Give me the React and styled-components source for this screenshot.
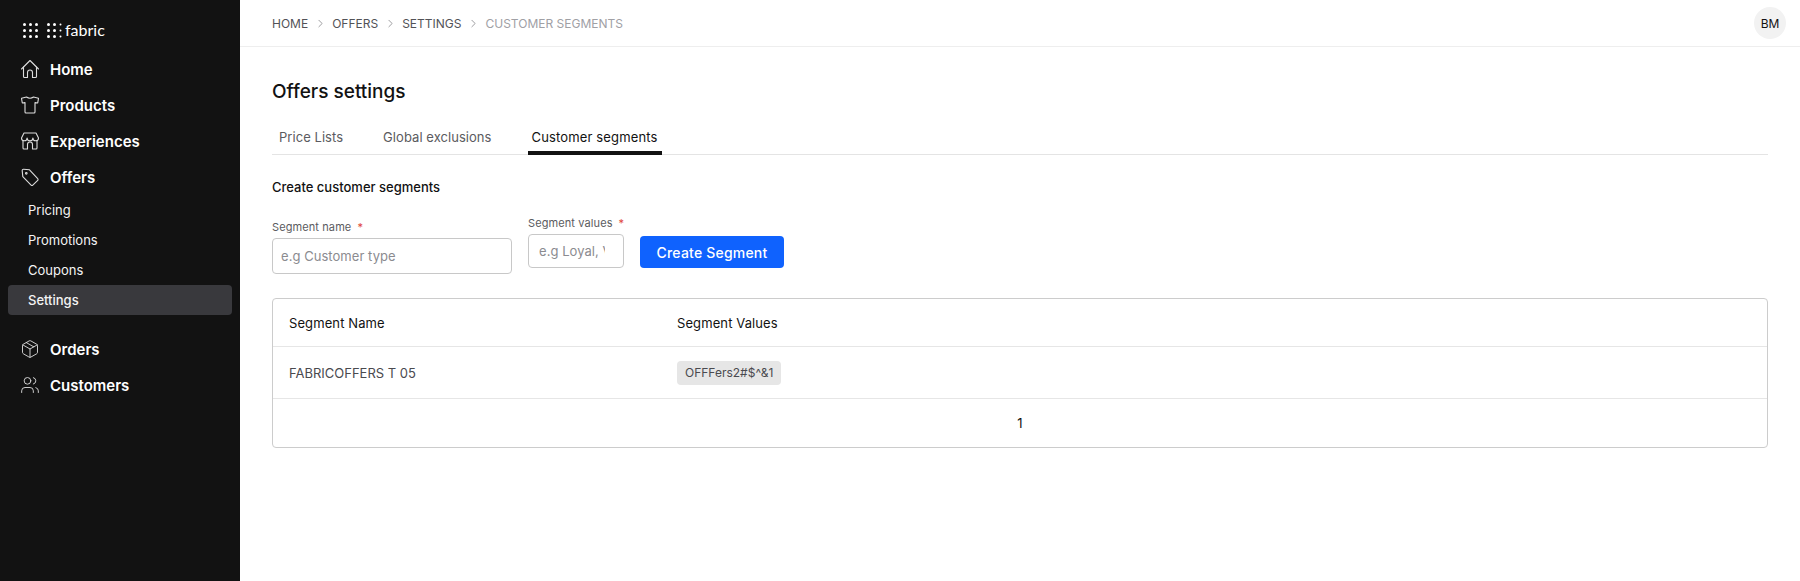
import React from "react";
import styled, { createGlobalStyle } from "styled-components";
import { Package, Users, ChevronRight } from "lucide-react";

const GlobalStyle = createGlobalStyle`
    html, body { margin: 0; padding: 0; background: #fff; }
    body { font-family: "Inter", "Liberation Sans", sans-serif; color: #121212; }
    * { box-sizing: border-box; }
`;

const Page = styled.div`
    display: flex;
    width: 100%;
    height: 581px;
    overflow: hidden;
`;

const Sidebar = styled.aside`
    width: 240px;
    flex: none;
    background: #121212;
    padding: 19px 8px 0;
`;

const LogoRow = styled.div`
    display: flex;
    align-items: center;
    height: 22px;
    padding-left: 15px;
    gap: 9px;
    margin-bottom: 10px;
`;

const LogoMark = styled.div`
    display: flex;
    align-items: center;
    gap: 3px;
`;

const LogoText = styled.span`
    font-family: "Lato", sans-serif;
    font-weight: 400;
    font-size: 16px;
    color: #fff;
    line-height: 22px;
`;

const NavItem = styled.div`
    display: flex;
    align-items: center;
    height: 36px;
    padding-left: 12px;
    gap: 10px;
    color: #fff;
    font-size: 15px;
    font-weight: 600;
    svg { color: #dcdcdc; flex: none; }
`;

const SubList = styled.div`
    display: flex;
    flex-direction: column;
    margin-bottom: 16px;
`;

const SubItem = styled.div`
    height: 30px;
    display: flex;
    align-items: center;
    padding-left: 20px;
    font-size: 13px;
    border-radius: 4px;
    color: #f4f4f4;
    font-weight: ${(p) => (p.$active ? 500 : 400)};
    background: ${(p) => (p.$active ? "#39393d" : "transparent")};
`;

const Main = styled.main`
    flex: 1;
    min-width: 0;
    display: flex;
    flex-direction: column;
`;

const TopBar = styled.header`
    height: 47px;
    flex: none;
    border-bottom: 1px solid #eeeeee;
    display: flex;
    align-items: center;
    justify-content: space-between;
    padding: 0 14px 0 32px;
`;

const Crumbs = styled.nav`
    display: flex;
    align-items: center;
    gap: 5.5px;
    font-size: 12px;
    svg { color: #6a6a6f; }
`;

const Crumb = styled.span`
    color: ${(p) => (p.$current ? "#a0a0a5" : "#525257")};
`;

const Avatar = styled.div`
    width: 32px;
    height: 32px;
    border-radius: 50%;
    background: #f2f2f2;
    display: flex;
    align-items: center;
    justify-content: center;
    font-size: 12px;
`;

const Content = styled.div`
    padding: 33px 32px 0;
`;

const Title = styled.h1`
    margin: 0 0 16px;
    font-size: 19px;
    line-height: 24px;
    font-weight: 500;
`;

const Tabs = styled.div`
    display: flex;
    gap: 32px;
    padding-left: 3px;
    height: 35px;
    border-bottom: 1px solid #e4e4e4;
    margin-bottom: 23px;
`;

const TabItem = styled.div`
    height: 35px;
    padding: 3px 4px 0;
    display: flex;
    align-items: center;
    font-size: 13px;
    letter-spacing: ${(p) => (p.$active ? "0.15px" : "0.05px")};
    color: ${(p) => (p.$active ? "#121212" : "#5b5b60")};
    border-bottom: 4px solid ${(p) => (p.$active ? "#121212" : "transparent")};
`;

const SectionTitle = styled.h2`
    margin: 0 0 19px;
    font-size: 13px;
    line-height: 18px;
    font-weight: 500;
`;

const FormRow = styled.div`
    display: flex;
    align-items: flex-start;
    gap: 16px;
    margin-bottom: 24px;
`;

const Field = styled.div`
    width: ${(p) => p.$width}px;
    margin-top: ${(p) => p.$top || 0}px;
`;

const Label = styled.label`
    display: block;
    font-size: 11px;
    line-height: 16px;
    color: #5b5b60;
    margin-bottom: 3px;
    letter-spacing: 0.1px;
    white-space: nowrap;
`;

const Required = styled.span`
    color: #e0453a;
    margin-left: 6px;
`;

const Input = styled.input`
    display: block;
    width: 100%;
    height: ${(p) => p.$height}px;
    border: 1px solid #c8c8c8;
    border-radius: 4px;
    padding: 0 ${(p) => p.$padRight || 8}px 0 ${(p) => p.$padLeft || 8}px;
    font-family: inherit;
    font-size: 13px;
    letter-spacing: 0.05px;
    &::placeholder { color: #8b8b90; opacity: 1; }
`;

const Button = styled.button`
    margin-top: 21px;
    width: 144px;
    height: 32px;
    border: none;
    border-radius: 4px;
    background: #0f62fe;
    color: #fff;
    font-family: inherit;
    font-size: 14px;
    font-weight: 500;
    letter-spacing: 0.2px;
`;

const TableCard = styled.div`
    border: 1px solid #cccccc;
    border-radius: 4px;
    height: 150px;
    display: flex;
    flex-direction: column;
`;

const Row = styled.div`
    display: grid;
    grid-template-columns: 388px 1fr;
    align-items: center;
    padding-left: 16px;
    height: ${(p) => p.$height}px;
    border-bottom: 1px solid #e6e6e6;
    font-size: 13px;
    letter-spacing: ${(p) => (p.$head ? "0.1px" : "0")};
    color: ${(p) => (p.$head ? "#121212" : "#4a4a4f")};
`;

const Chip = styled.span`
    display: inline-block;
    height: 24px;
    line-height: 24px;
    padding: 0 8px;
    border-radius: 4px;
    background: #e6e6e6;
    font-size: 12px;
    color: #4a4a4f;
`;

const Pager = styled.div`
    flex: 1;
    display: flex;
    align-items: center;
    justify-content: center;
    font-size: 13px;
`;

const Dots = ({ faded }) => {
    const pts = [];
    for (let r = 0; r < 3; r++) for (let c = 0; c < 3; c++) pts.push([c, r]);
    return (
        <svg width="15" height="15" viewBox="0 0 15 15">
            {pts.map(([c, r]) => (
                <circle key={`${c}-${r}`} cx={1.5 + c * 6} cy={1.5 + r * 6} r={faded && c === 2 ? 1 : 1.5} fill="#fff" />
            ))}
        </svg>
    );
};

const Line = ({ children }) => (
    <svg width="20" height="20" viewBox="0 0 20 20" fill="none" stroke="currentColor" strokeWidth="1.1" strokeLinecap="round" strokeLinejoin="round">
        {children}
    </svg>
);

const HomeIcon = () => (
    <Line>
        <path d="M1.5 10 10 1.5 18.5 10" />
        <path d="M3.5 8v9.5a1 1 0 0 0 1 1H7.5v-5a2.5 2.5 0 0 1 5 0v5h3a1 1 0 0 0 1-1V8" />
    </Line>
);

const ShirtIcon = () => (
    <Line>
        <path d="M6.5 2Q10 4.5 13.5 2l5 1.3-.8 4.7-2.7-.4V17a1 1 0 0 1-1 1H6a1 1 0 0 1-1-1V7.6L2.3 8l-.8-4.7Z" />
    </Line>
);

const StoreIcon = () => (
    <Line>
        <path d="M4 2h12l2.5 5a2.8 2.8 0 0 1-5.6 0 2.9 2.9 0 0 1-5.8 0 2.8 2.8 0 0 1-5.6 0Z" />
        <path d="M3 10v7a1 1 0 0 0 1 1h3.5v-4.5a2.5 2.5 0 0 1 5 0V18H16a1 1 0 0 0 1-1v-7" />
    </Line>
);

const TagIcon = () => (
    <Line>
        <path d="M2.2 3.6a1.2 1.2 0 0 1 1.3-1.3l6 .5 8.2 8.8a1.2 1.2 0 0 1 0 1.7l-4.9 4.9a1.2 1.2 0 0 1-1.7 0L2.8 9.6Z" />
        <circle cx="6.3" cy="6.3" r="0.8" />
    </Line>
);

const PackageIcon = () => <Package size={20} strokeWidth={1.1} />;
const UsersIcon = () => <Users size={20} strokeWidth={1.1} />;

const navTop = [
    { label: "Home", Icon: HomeIcon },
    { label: "Products", Icon: ShirtIcon },
    { label: "Experiences", Icon: StoreIcon },
    { label: "Offers", Icon: TagIcon },
];
const navBottom = [
    { label: "Orders", Icon: PackageIcon },
    { label: "Customers", Icon: UsersIcon },
];

const renderNav = (items) =>
    items.map(({ label, Icon }) => (
        <NavItem key={label}>
            <Icon />
            {label}
        </NavItem>
    ));

export default function App() {
    return (
        <Page>
            <GlobalStyle />
            <Sidebar>
                <LogoRow>
                    <Dots />
                    <LogoMark>
                        <Dots faded />
                        <LogoText>fabric</LogoText>
                    </LogoMark>
                </LogoRow>
                {renderNav(navTop)}
                <SubList>
                    <SubItem>Pricing</SubItem>
                    <SubItem>Promotions</SubItem>
                    <SubItem>Coupons</SubItem>
                    <SubItem $active>Settings</SubItem>
                </SubList>
                {renderNav(navBottom)}
            </Sidebar>
            <Main>
                <TopBar>
                    <Crumbs>
                        <Crumb>HOME</Crumb>
                        <ChevronRight size={13} strokeWidth={1.2} />
                        <Crumb>OFFERS</Crumb>
                        <ChevronRight size={13} strokeWidth={1.2} />
                        <Crumb>SETTINGS</Crumb>
                        <ChevronRight size={13} strokeWidth={1.2} />
                        <Crumb $current>CUSTOMER SEGMENTS</Crumb>
                    </Crumbs>
                    <Avatar>BM</Avatar>
                </TopBar>
                <Content>
                    <Title>Offers settings</Title>
                    <Tabs>
                        <TabItem>Price Lists</TabItem>
                        <TabItem>Global exclusions</TabItem>
                        <TabItem $active>Customer segments</TabItem>
                    </Tabs>
                    <SectionTitle>Create customer segments</SectionTitle>
                    <FormRow>
                        <Field $width={240} $top={4}>
                            <Label>Segment name<Required>*</Required></Label>
                            <Input $height={36} placeholder="e.g Customer type" />
                        </Field>
                        <Field $width={96}>
                            <Label>Segment values<Required>*</Required></Label>
                            <Input $height={34} $padLeft={10} $padRight={18} placeholder="e.g Loyal, VIP" />
                        </Field>
                        <Button>Create Segment</Button>
                    </FormRow>
                    <TableCard>
                        <Row $head $height={48}>
                            <span>Segment Name</span>
                            <span>Segment Values</span>
                        </Row>
                        <Row $height={52}>
                            <span>FABRICOFFERS T 05</span>
                            <span><Chip>OFFFers2#$^&1</Chip></span>
                        </Row>
                        <Pager>1</Pager>
                    </TableCard>
                </Content>
            </Main>
        </Page>
    );
}
